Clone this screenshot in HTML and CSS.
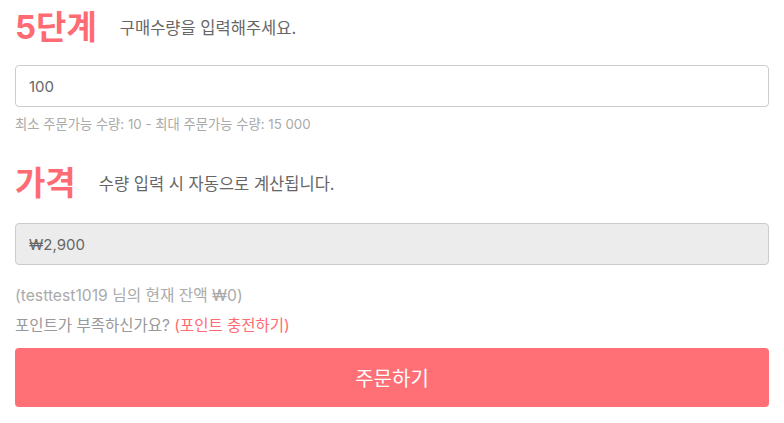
FILE: index.html
```html
<!DOCTYPE html>
<html lang="ko">
<head>
	<meta charset="UTF-8">
	<title>주문</title>
	<link rel="stylesheet" href="styles.css">
</head>
<body>
	<div class="order">
		<div class="step-head">
			<h2 class="step-title">5단계</h2>
			<p class="step-desc">구매수량을 입력해주세요.</p>
		</div>
		<input class="field" type="text" value="100">
		<p class="hint">최소 주문가능 수량: 10 - 최대 주문가능 수량: 15 000</p>

		<div class="step-head price-head">
			<h2 class="step-title">가격</h2>
			<p class="step-desc">수량 입력 시 자동으로 계산됩니다.</p>
		</div>
		<input class="field field-off" type="text" value="₩2,900" readonly>
		<p class="balance">(testtest1019 님의 현재 잔액 ₩0)</p>
		<p class="charge">포인트가 부족하신가요? <a href="javascript:void(0)">(포인트 충전하기)</a></p>
		<button class="order-btn" type="button">주문하기</button>
	</div>
</body>
</html>
```

FILE: styles.css
```css
*{padding: 0;margin: 0;box-sizing: border-box;}
body{font-family: "Inter", "Noto Sans CJK KR", sans-serif;background: #fff;color: #666;}
.order{padding: 8px 15px 0 15px;}
.step-head{display: flex;align-items: center;height: 38px;}
.step-title{font-size: 33px;font-weight: 700;color: #ff6b72;margin-right: 23px;line-height: 38px;}
.step-desc{font-size: 16.5px;color: #666;}
.field{display: block;width: 100%;height: 42px;margin-top: 19px;padding: 0 13px;border: 1px solid #ccc;border-radius: 4px;font-family: inherit;font-size: 15px;color: #666;background: #fff;outline: none;}
.field-off{background: #ececec;margin-top: 21px;}
.hint{font-size: 13.3px;color: #aaa;margin-top: 8px;line-height: 18px;}
.price-head{margin-top: 31px;}
.balance{font-size: 15.7px;color: #aaa;margin-top: 20px;line-height: 22px;}
.charge{font-size: 15.5px;color: #999;margin-top: 9px;line-height: 20px;}
.charge a{color: #ff6b72;text-decoration: none;}
.order-btn{display: block;width: 100%;height: 59px;margin-top: 12px;border: none;border-radius: 4px;background: #ff6f76;color: #fff;font-family: inherit;font-size: 20px;}
```
